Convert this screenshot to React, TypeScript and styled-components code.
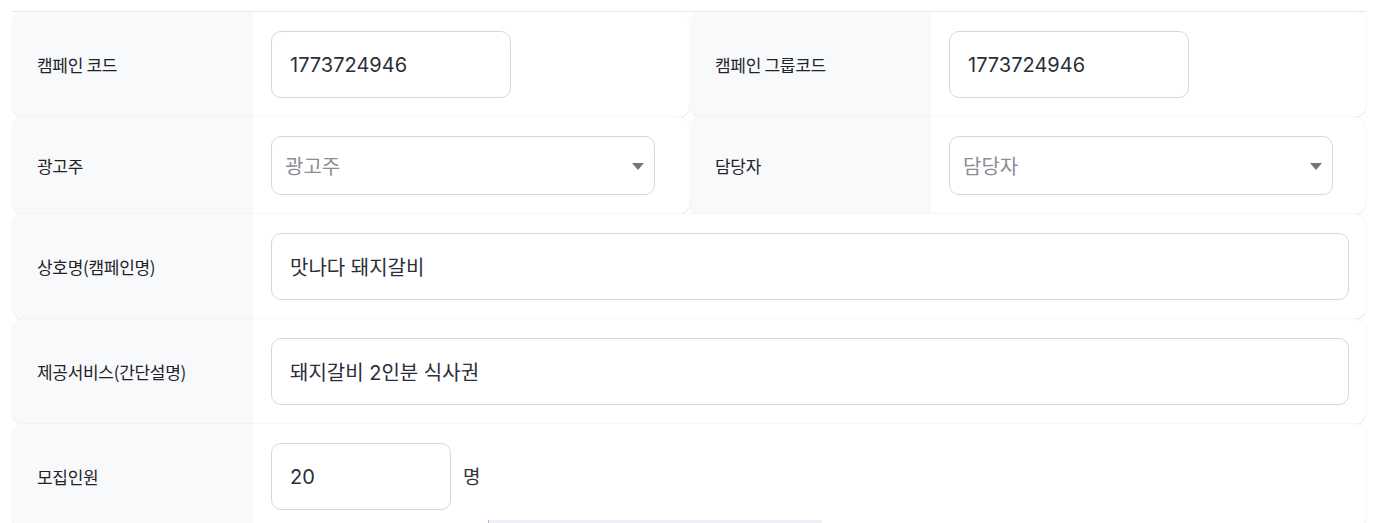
import React from 'react';
import styled, {createGlobalStyle} from 'styled-components';

const GlobalStyle = createGlobalStyle`
  html, body {
    margin: 0;
    padding: 0;
    background: #fff;
  }

  body {
    font-family: Inter, "Noto Sans CJK KR", sans-serif;
    color: #222;
  }
`;

const Page = styled.div`
  padding: 11px 27px 0 12px;
  height: 523px;
  box-sizing: border-box;
  overflow: hidden;
`;

const Form = styled.div`
  border-top: 1px solid #e6e8ec;
  display: flex;
  flex-direction: column;
`;

const Row = styled.div<{$split?: boolean}>`
  display: grid;
  grid-template-columns: ${({$split}) => ($split ? '678px 1fr' : '1fr')};
`;

const Cell = styled.div`
  display: grid;
  grid-template-columns: 241px 1fr;
  border-radius: 12px;
  overflow: hidden;
  box-shadow: 0 1px 0 #e6e8ec, 0 0 0 1px rgba(230, 232, 236, 0.35);
  background: #fff;
`;

const Label = styled.div`
  background: #f8f9fb;
  display: flex;
  align-items: center;
  padding-left: 25px;
  font-size: 17px;
  font-weight: 400;
  color: #1f2329;
  font-family: "Noto Sans CJK KR", sans-serif;
  letter-spacing: -0.3px;
`;

const Body = styled.div`
  display: flex;
  flex-direction: column;
  padding: 19px 17px 19px 18px;
`;

const Line = styled.div`
  position: relative;
  display: flex;
  align-items: center;
  gap: 12px;
`;

const Input = styled.input<{$width?: number}>`
  box-sizing: border-box;
  width: ${({$width}) => ($width ? `${$width}px` : '100%')};
  height: 67px;
  border: 1px solid #d4d7de;
  border-radius: 10px;
  padding: 0 18px;
  font-family: Inter, "Noto Sans CJK KR", sans-serif;
  font-size: 20px;
  color: #2a2f3a;
  background: #fff;
  outline: none;
`;

const SelectBox = styled.div`
  box-sizing: border-box;
  width: 384px;
  height: 59px;
  border: 1px solid #d4d7de;
  border-radius: 10px;
  padding: 0 10px 0 13px;
  display: flex;
  align-items: center;
  justify-content: space-between;
  background: #fff;
`;

const Placeholder = styled.span`
  font-family: "Noto Sans CJK KR", sans-serif;
  font-size: 20px;
  color: #8a8d93;
`;

const Arrow = styled.span`
  width: 0;
  height: 0;
  border-left: 6px solid transparent;
  border-right: 6px solid transparent;
  border-top: 7px solid #777;
  margin-top: 2px;
`;

const Unit = styled.span`
  font-family: "Noto Sans CJK KR", sans-serif;
  font-size: 19px;
  color: #333;
  margin-top: -2px;
`;

// popover edge peeking below the field, cut by the viewport
const Peek = styled.div`
  position: absolute;
  top: calc(100% + 10px);
  left: 217px;
  width: 334px;
  height: 6px;
  background: #eef0f7;
  border-left: 1px solid #b9bcc6;
  box-sizing: border-box;
`;

const Select = ({placeholder}: {placeholder: string}) => (
    <SelectBox>
        <Placeholder>{placeholder}</Placeholder>
        <Arrow />
    </SelectBox>
);

export default function App() {
    return (
        <>
            <GlobalStyle />
            <Page>
                <Form>
                    <Row $split>
                        <Cell>
                            <Label>캠페인 코드</Label>
                            <Body>
                                <Input $width={240} defaultValue="1773724946" />
                            </Body>
                        </Cell>
                        <Cell>
                            <Label>캠페인 그룹코드</Label>
                            <Body>
                                <Input $width={240} defaultValue="1773724946" />
                            </Body>
                        </Cell>
                    </Row>
                    <Row $split>
                        <Cell>
                            <Label>광고주</Label>
                            <Body>
                                <Select placeholder="광고주" />
                            </Body>
                        </Cell>
                        <Cell>
                            <Label>담당자</Label>
                            <Body>
                                <Select placeholder="담당자" />
                            </Body>
                        </Cell>
                    </Row>
                    <Row>
                        <Cell>
                            <Label>상호명(캠페인명)</Label>
                            <Body>
                                <Input defaultValue="맛나다 돼지갈비" />
                            </Body>
                        </Cell>
                    </Row>
                    <Row>
                        <Cell>
                            <Label>제공서비스(간단설명)</Label>
                            <Body>
                                <Input defaultValue="돼지갈비 2인분 식사권" />
                            </Body>
                        </Cell>
                    </Row>
                    <Row>
                        <Cell>
                            <Label>모집인원</Label>
                            <Body>
                                <Line>
                                    <Input $width={180} defaultValue="20" />
                                    <Unit>명</Unit>
                                    <Peek />
                                </Line>
                            </Body>
                        </Cell>
                    </Row>
                </Form>
            </Page>
        </>
    );
}
